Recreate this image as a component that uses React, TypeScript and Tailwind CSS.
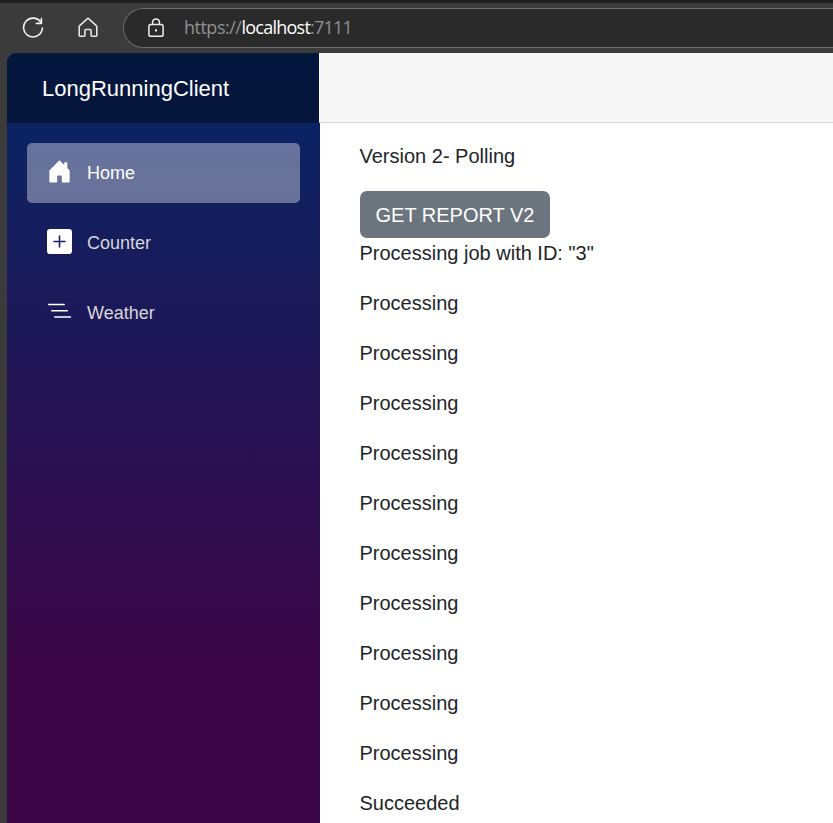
import React from "react";
import { BsHouseDoorFill, BsPlusSquareFill, BsListNested } from "react-icons/bs";

const nav = [
  { label: "Home", Icon: BsHouseDoorFill, active: true },
  { label: "Counter", Icon: BsPlusSquareFill, active: false },
  { label: "Weather", Icon: BsListNested, active: false },
];

const messages = [
  'Processing job with ID: "3"',
  ...Array.from({ length: 10 }, () => "Processing"),
  "Succeeded",
];

function Toolbar() {
  return (
    <header className="flex h-[53px] shrink-0 items-start border-t-[3px] border-[#202020] bg-[#3b3b3b] pl-[22px]">
      <svg className="mt-[14px] h-[22px] w-[22px] shrink-0" viewBox="0 0 22 22" fill="none" stroke="#f2f2f2" strokeWidth="1.6" strokeLinecap="round" strokeLinejoin="round">
        <path d="M19.2 5.9A9.4 9.4 0 1 0 20.4 11" />
        <path d="M19.4 1.6v4.8h-5" />
      </svg>
      <svg className="mt-[14px] ml-[34px] h-[22px] w-5 shrink-0" viewBox="0 0 20 22" fill="none" stroke="#e4e4e4" strokeWidth="1.6" strokeLinejoin="round">
        <path d="M1.7 8.7 9.2 1.8q.8-.7 1.6 0l7.5 6.9q.5.5.5 1.2v8.3q0 1.1-1.1 1.1h-3.5q-1.1 0-1.1-1.1v-4.6q0-1.1-1.1-1.1H8q-1.1 0-1.1 1.1v4.6q0 1.1-1.1 1.1H2.3q-1.1 0-1.1-1.1V9.9q0-.7.5-1.2Z" />
      </svg>
      <div className="mt-[5px] ml-[25px] flex h-10 flex-1 items-center rounded-l-full border border-r-0 border-[#6a6a6a] bg-[#2a2a2a] pl-6">
        <svg className="h-5 w-4 shrink-0" viewBox="0 0 16 20" fill="none" stroke="#ededed" strokeWidth="1.5">
          <rect x=".9" y="6.6" width="14.2" height="11.6" rx="1.8" />
          <path d="M4.6 6.5V4.3a3.4 3.4 0 0 1 6.8 0v2.2" />
          <rect x="7" y="11.4" width="2" height="2" fill="#fff" stroke="none" />
        </svg>
        <div className="ml-5 flex pb-0.5 text-[18px] leading-6 text-[#909090] [font-family:'Open_Sans','Noto_Sans',sans-serif]">
          <span className="tracking-[-0.5px]">https://</span>
          <span className="tracking-[-0.75px] text-white">localhost</span>
          <span className="tracking-[-0.8px]">:7111</span>
        </div>
      </div>
    </header>
  );
}

function Sidebar() {
  return (
    <aside className="w-[313px] shrink-0 rounded-tl-[9px] bg-[linear-gradient(180deg,#052767_0px,#3a0647_600px)] [clip-path:polygon(0_0,312px_0,312px_70px,100%_70px,100%_100%,0_100%)]">
      <div className="flex h-[70px] items-center rounded-tl-[9px] bg-black/40 pl-[35px] text-[22px] text-white">
        LongRunningClient
      </div>
      <nav className="flex flex-col gap-[10px] px-5 pt-5">
        {nav.map(({ label, Icon, active }) => (
          <a key={label} className={active
            ? "flex h-[60px] items-center rounded-[5px] bg-white/37 pl-5 text-[18px] text-white"
            : "flex h-[60px] items-center rounded-[5px] pl-5 text-[18px] text-[#d7d7d7]"}>
            <Icon className="mr-[15px] mb-[3px] h-[25px] w-[25px] text-white" />
            {label}
          </a>
        ))}
      </nav>
    </aside>
  );
}

export default function App() {
  return (
    <div className="flex h-[823px] w-[833px] flex-col overflow-hidden bg-[#3b3b3b] [font-family:'Liberation_Sans',Arial,sans-serif]">
      <Toolbar />
      <div className="flex min-h-0 flex-1 pl-[7px]">
        <Sidebar />
        <main className="-ml-px flex-1 bg-white text-xl leading-[30px] text-[#212529]">
          <div className="h-[70px] border-b border-[#d6d5d5] bg-[#f7f7f7]" />
          <div className="pt-[18px] pl-[41px]">
            <p className="-ml-[0.5px]">Version 2- Polling</p>
            <button className="mt-5 block h-[47px] w-[190px] rounded-[7px] bg-[#6c757d] text-white">GET REPORT V2</button>
            <div className="-ml-[0.5px] flex flex-col gap-5">
              {messages.map((message, i) => <p key={i}>{message}</p>)}
            </div>
          </div>
        </main>
      </div>
    </div>
  );
}
